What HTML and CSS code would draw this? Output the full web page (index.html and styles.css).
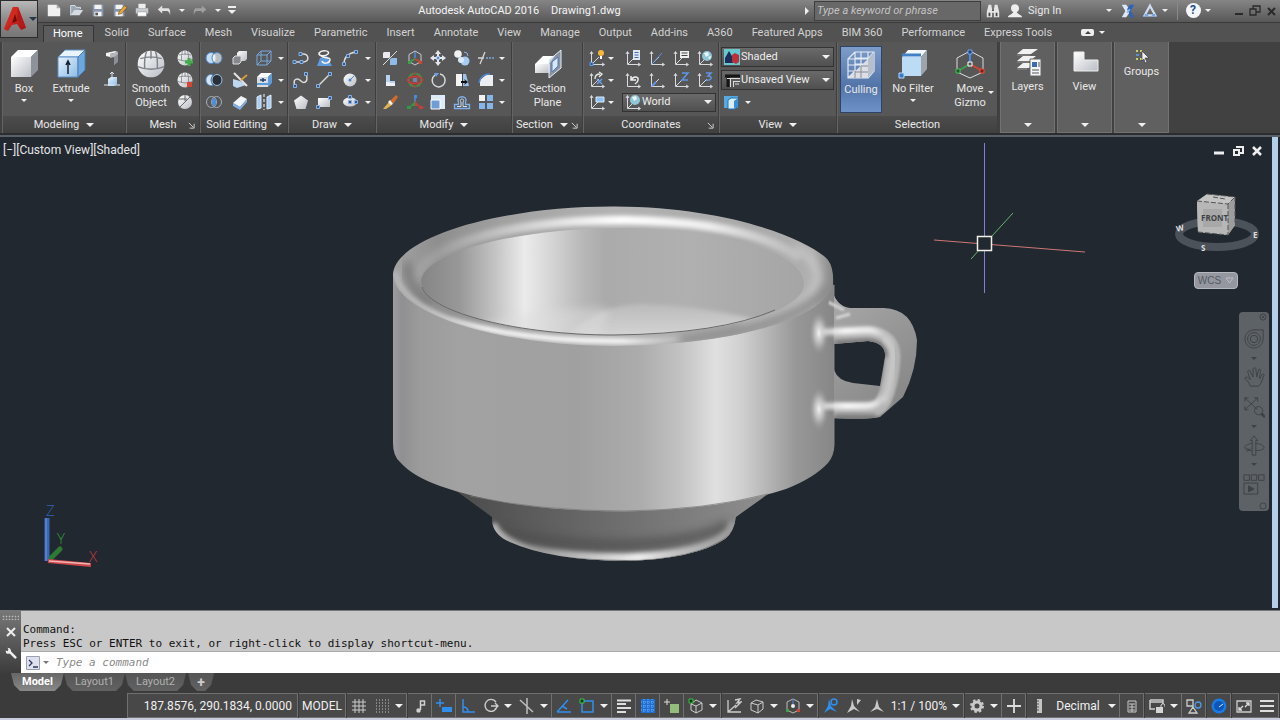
FILE: index.html
```html
<!DOCTYPE html>
<html lang="en">
<head>
<meta charset="utf-8">
<title>Autodesk AutoCAD 2016 - Drawing1.dwg</title>
<link rel="stylesheet" href="styles.css">
</head>
<body>
<svg class="defs" aria-hidden="true">
  <defs>
    <linearGradient id="gW" x1="0" y1="0" x2="1" y2="1"><stop offset="0" stop-color="#fff"/><stop offset="1" stop-color="#b9bdc4"/></linearGradient>
    <linearGradient id="gB" x1="0" y1="0" x2="1" y2="1"><stop offset="0" stop-color="#e6f2fc"/><stop offset="1" stop-color="#8dbbe6"/></linearGradient>
    <linearGradient id="gR" x1="0" y1="0" x2="1" y2="1"><stop offset="0" stop-color="#e8382c"/><stop offset="1" stop-color="#a31214"/></linearGradient>
    <symbol id="axes" viewBox="0 0 18 18"><path d="M3.500 3v12.500H16M4 15l7-7M2 5l1.500-2.500L5 5M14 14l2.500 1.500L14 17" fill="none" stroke="#d8dade"/></symbol>
    <symbol id="ball" viewBox="0 0 18 18"><circle cx="9" cy="9" r="7.500" fill="url(#gW)"/><path d="M3 6q6-2 12 0M1.500 10.500q7.500 3 15 0M6.500 2Q5 6 5.500 11.500M11.500 2Q13 6 12.500 11.500M9 1.500V6" fill="none" stroke="#7c8188" stroke-width=".8"/></symbol>
  </defs>
</svg>

<header class="top">
  <button class="app" aria-label="Application menu">
    <svg width="24" height="26" viewBox="0 0 24 26"><path d="M10 1h5l8 21-5 2-4-6-5 1-4 6-4-2z" fill="url(#gR)"/><path d="M10 1L1 23l11-11 3-11z" fill="#d3281f"/><path d="M12 8l2 7-5 2z" fill="#6f0c10"/><path d="M15 1l8 21-9-8z" fill="#b31a18"/></svg>
    <i class="dn dark"></i>
  </button>
  <div class="titlebar">
    <div class="qat">
      <button aria-label="New"><svg viewBox="0 0 18 18"><path d="M2 3h10l4 4v9H2z" fill="#f0f0f0"/><path d="M12 3v4h4" fill="#aaa"/></svg></button>
      <button aria-label="Open"><svg viewBox="0 0 18 18"><path d="M3 15V4h5l1 2h5v2" fill="#9ca7b5" stroke="#dfe5ec"/><path d="M3 15l4-6h10l-4 6z" fill="#d6dbe1"/></svg></button>
      <button aria-label="Save"><svg viewBox="0 0 18 18"><path d="M3 3h12v13H3z" fill="#8796ad"/><path d="M5 3h8v5H5zM5 11h8v5H5z" fill="#f3f3f3"/><path d="M6 12h3v3H6z" fill="#555"/></svg></button>
      <button aria-label="Save as"><svg viewBox="0 0 18 18"><path d="M2 3h12v13H2z" fill="#8796ad"/><path d="M4 3h8v5H4zM4 11h8v5H4z" fill="#f3f3f3"/><path d="M8 11l6-7 3 2-6 7-4 1z" fill="#e7a73c" stroke="#5a3d17" stroke-width=".6"/></svg></button>
      <button aria-label="Plot"><svg viewBox="0 0 18 18"><path d="M5 2h8v5H5z" fill="#eee"/><path d="M2 7h14v6H2z" fill="#c9ccd1"/><path d="M4 11h10v5H4z" fill="#fff" stroke="#888" stroke-width=".6"/></svg></button>
      <button aria-label="Undo"><svg viewBox="0 0 18 18"><path d="M7 4v3h6c3 0 3 3 3 8-1-4-2-5-4-5H7v3L2 8.500z" fill="#e2e2e2"/></svg></button>
      <button class="nar" aria-label="Undo list"><i class="dn sm"></i></button>
      <button aria-label="Redo"><svg viewBox="0 0 18 18"><path d="M11 4v3H5c-3 0-3 3-3 8 1-4 2-5 4-5h5v3l5-4.500z" fill="#a0a0a0"/></svg></button>
      <button class="nar" aria-label="Redo list"><i class="dn sm"></i></button>
      <button class="nar" aria-label="Customize"><i class="bar"></i><i class="dn"></i></button>
    </div>
    <h1 class="title">Autodesk AutoCAD 2016 <span>Drawing1.dwg</span></h1>
    <div class="info">
      <button class="nar" aria-label="Collapse search"><i class="rt"></i></button>
      <input class="search" type="text" placeholder="Type a keyword or phrase" aria-label="Search">
      <button class="bino" aria-label="Find"><svg viewBox="0 0 18 18"><path d="M4 2h3l1 5h2l1-5h3l2 8v6h-6v-5H8v5H2v-6z" fill="#e4e4e4"/><path d="M4 11h2v4H4zM12 11h2v4h-2zM8 7h2v2H8z" fill="#444"/></svg></button>
      <button class="sign"><svg viewBox="0 0 18 18"><circle cx="9" cy="6" r="4.500" fill="#eee"/><path d="M1 16c0-3 5-3 6-6h4c1 3 6 3 6 6z" fill="#eee"/></svg>Sign In</button>
      <button class="a12" aria-label="Account"><i class="dn sm"></i></button>
      <button class="b26" aria-label="Exchange"><svg viewBox="0 0 18 18"><path d="M2 2h5l5 7-5 7H2l4-7z" fill="#dfe9f5"/><path d="M16 2h-5L8 7l2 4 1 5h5l-4-7z" fill="#2c62b8"/><path d="M8 11l3-4" stroke="#8fb9ea" stroke-width="2"/></svg></button>
      <button class="b18" aria-label="A360"><svg viewBox="0 0 18 18"><path d="M9 3l6 11H3z" fill="none" stroke="#cfdcf0" stroke-width="2.500"/><path d="M3 14h4M11 14h4" stroke="#7ba6e4" stroke-width="3"/></svg></button>
      <button class="a12" aria-label="A360 list"><i class="dn sm"></i></button>
      <span class="sep"></span>
      <button class="b18" aria-label="Help"><b class="q">?</b></button>
      <button class="a12" aria-label="Help list"><i class="dn sm"></i></button>
      <span class="wins">
        <button aria-label="Minimize"><svg viewBox="0 0 12 12"><path d="M2 9h8" stroke="#2a2a2a" stroke-width="2"/></svg></button>
        <button aria-label="Restore"><svg viewBox="0 0 12 12"><path d="M1 4h6v6H1zM4 4V1h7v6H7" fill="none" stroke="#2a2a2a" stroke-width="1.300"/></svg></button>
        <button aria-label="Close"><svg viewBox="0 0 12 12"><path d="M3 3l7 7M10 3l-7 7" stroke="#2a2a2a" stroke-width="2"/></svg></button>
      </span>
    </div>
  </div>
  <nav class="tabs">
    <button class="on">Home</button><button>Solid</button><button>Surface</button><button>Mesh</button><button>Visualize</button><button>Parametric</button><button>Insert</button><button>Annotate</button><button>View</button><button>Manage</button><button>Output</button><button>Add-ins</button><button>A360</button><button>Featured Apps</button><button>BIM 360</button><button>Performance</button><button>Express Tools</button>
    <button class="mini" aria-label="Minimize ribbon"><span class="pill"><i class="up"></i></span><i class="dn sm"></i></button>
  </nav>
</header>

<main class="ribbon">
  <section class="panel modeling">
    <div class="body">
      <button class="big w42"><svg viewBox="0 0 32 32"><path d="M3 9l7-7h20l-7 7z" fill="#fff"/><path d="M3 9h20v20H3z" fill="url(#gW)"/><path d="M23 9l7-7v20l-7 7z" fill="#8e939b"/></svg>Box<i class="dn sm"></i></button>
      <button class="big w52"><svg viewBox="0 0 32 32"><path d="M3 9l7-7h20l-7 7z" fill="#e9f4fd" stroke="#5d91c6"/><path d="M3 9h20v20H3z" fill="url(#gB)" stroke="#5d91c6"/><path d="M23 9l7-7v20l-7 7z" fill="#6ea7dd" stroke="#4a7db3"/><path d="M13 26V14m-2 3l2-4 2 4" fill="none" stroke="#15202c" stroke-width="1.500"/></svg>Extrude<i class="dn sm"></i></button>
      <div class="grid g1">
        <button aria-label="Polysolid"><svg viewBox="0 0 18 18"><path d="M3 4l9-2 3 1-8 2v3l-4-1z" fill="#f2f2f4"/><path d="M7 5l8-2v9l-4 4V8L7 9z" fill="#b4b7bc"/><path d="M11 8l4-3v8l-4 3z" fill="#8c9096"/></svg></button>
        <button aria-label="Presspull"><svg viewBox="0 0 18 18"><path d="M5 8l3-2h6v7l-3 2H5z" fill="url(#gB)"/><path d="M9 9V1M7 3l2-2 2 2M1 14h16" stroke="#dbe8f5" fill="none"/></svg></button>
      </div>
    </div>
    <footer>Modeling<i class="dn"></i></footer>
  </section>
  <section class="panel mesh">
    <div class="body">
      <button class="big w48"><svg viewBox="0 0 18 18"><use href="#ball"/></svg>Smooth<br>Object</button>
      <div class="grid g2">
        <button aria-label="Smooth more"><svg viewBox="0 0 18 18"><use href="#ball"/><path d="M13 9v8M9 13h8" stroke="#3fae49" stroke-width="3"/></svg></button>
        <button aria-label="Smooth less"><svg viewBox="0 0 18 18"><use href="#ball"/><path d="M11 11h5v5h-5z" fill="#d8462f"/></svg></button>
        <button aria-label="Refine"><svg viewBox="0 0 18 18"><circle cx="9" cy="9" r="7" fill="url(#gW)"/><path d="M2 16L16 2M3 6h8M9 2v6" stroke="#666" fill="none"/></svg></button>
      </div>
    </div>
    <footer>Mesh<svg class="launch" viewBox="0 0 8 8"><path d="M1 1l5 5M7 2v5H2" fill="none" stroke="#e0e0e0"/></svg></footer>
  </section>
  <section class="panel solid">
    <div class="body"><div class="grid g3">
      <button aria-label="Union"><svg viewBox="0 0 18 18"><ellipse cx="6" cy="9" rx="5" ry="5.500" fill="#c6dcf3" stroke="#4d86c8"/><ellipse cx="12" cy="9" rx="5" ry="5.500" fill="#fff" fill-opacity=".6" stroke="#4d86c8"/></svg></button>
      <button aria-label="Interfere"><svg viewBox="0 0 18 18"><path d="M6 4l2-2h8v8l-2 2H6z" fill="url(#gW)"/><path d="M2 9l2-2h6v6l-2 2H2z" fill="#85888d" stroke="#ddd"/></svg></button>
      <button aria-label="Extract edges"><svg viewBox="0 0 18 18"><path d="M2 6h10v10H2zM6 2h10v10H6zM2 6l4-4M12 6l4-4M12 16l4-4M2 16l4-4" fill="none" stroke="#78a9df"/></svg></button>
      <i class="dn sm"></i>
      <button aria-label="Subtract"><svg viewBox="0 0 18 18"><ellipse cx="12" cy="9" rx="5" ry="5.500" fill="#2a3038" stroke="#9cbfe6"/><path d="M8 4a5 5.500 0 1 0 0 10 8 8 0 0 1 0-10z" fill="#d5e5f6" stroke="#4d86c8"/></svg></button>
      <button aria-label="Slice"><svg viewBox="0 0 18 18"><path d="M2 8l7 2 6 4-9 3-4-2z" fill="#bed7ef"/><path d="M3 2l13 13" stroke="#e3e3e3" stroke-width="2"/><path d="M10 9l6-5" stroke="#d69a3c" stroke-width="2"/></svg></button>
      <button aria-label="Extrude faces"><svg viewBox="0 0 18 18"><path d="M2 6l4-4h11l-4 4z" fill="#fff"/><path d="M2 6h11v10H2z" fill="#d8dde4"/><path d="M13 6l4-4v10l-4 4z" fill="#5e9bd9"/><path d="M5 9h6M8 7v4" stroke="#22426a" stroke-width="1.500"/><path d="M2 12h11v2H2z" fill="#5e9bd9"/></svg></button>
      <i class="dn sm"></i>
      <button aria-label="Intersect"><svg viewBox="0 0 18 18"><ellipse cx="6.500" cy="9" rx="5" ry="5.500" fill="none" stroke="#a3aebb"/><ellipse cx="11.500" cy="9" rx="5" ry="5.500" fill="none" stroke="#a3aebb"/><path d="M9 4.500q4.500 4.500 0 9-4.500-4.500 0-9z" fill="#4a90dc"/></svg></button>
      <button aria-label="Thicken"><svg viewBox="0 0 18 18"><path d="M2 10l8-7 6 3-7 8z" fill="#f1f4f8"/><path d="M2 10l7 4 7-8v3l-7 8-7-4z" fill="#83b1e2"/></svg></button>
      <button aria-label="Separate"><svg viewBox="0 0 18 18"><path d="M2 4l4-2v13l-4 1zM12 4l4-2v13l-4 1z" fill="#a9cdf0" stroke="#dcebfa"/><path d="M9 1v16" stroke="#fff" stroke-dasharray="3 2"/></svg></button>
      <i class="dn sm"></i>
    </div></div>
    <footer>Solid Editing<i class="dn"></i></footer>
  </section>
  <section class="panel draw">
    <div class="body"><div class="grid g4">
      <button aria-label="Polyline"><svg viewBox="0 0 18 18"><path d="M2 13h9c7 0 6-8 0-8H8" fill="none" stroke="#dcdcdc" stroke-width="1.500"/><path d="M1 11.500h3v3H1zM8 11.500h3v3H8zM7 3.500h3v3H7z" fill="#3c5680" stroke="#86b2ea"/></svg></button>
      <button aria-label="Helix"><svg viewBox="0 0 18 18"><path d="M5 9l-3 8h15l-5-10z" fill="#5e9bdc"/><path d="M4 4c3-4 12-2 9 1S3 7 4 4c1 7 12 3 11 7s-7 4-8 1" fill="none" stroke="#f3f3f3" stroke-width="1.500"/></svg></button>
      <button aria-label="Arc"><svg viewBox="0 0 18 18"><path d="M3 15C3 8 8 4 15 3" fill="none" stroke="#dcdcdc" stroke-width="1.500"/><path d="M1.500 13.500h3v3h-3zM5.500 5.500h3v3h-3zM13.500 1.500h3v3h-3z" fill="#3c5680" stroke="#86b2ea"/></svg></button>
      <i class="dn sm"></i>
      <button aria-label="Spline"><svg viewBox="0 0 18 18"><path d="M3 15c-3-8 3-8 6-5s8 1 5-7" fill="none" stroke="#dcdcdc" stroke-width="1.500"/><path d="M1.500 13.500h3v3h-3zM12.500 1.500h3v3h-3z" fill="#3c5680" stroke="#86b2ea"/></svg></button>
      <button aria-label="Line"><svg viewBox="0 0 18 18"><path d="M3 15L15 3" stroke="#dcdcdc" stroke-width="1.500"/><path d="M1.500 13.500h3v3h-3zM13.500 1.500h3v3h-3z" fill="#3c5680" stroke="#86b2ea"/></svg></button>
      <button aria-label="Circle"><svg viewBox="0 0 18 18"><circle cx="9" cy="9" r="6.500" fill="url(#gW)"/><circle cx="9" cy="9" r="1.500" fill="#4d86c8"/><path d="M9 9l4-4" stroke="#4d86c8"/></svg></button>
      <i class="dn sm"></i>
      <button aria-label="Polygon"><svg viewBox="0 0 18 18"><path d="M9 2.500l7 5L13.500 16h-9L2 7.500z" fill="url(#gW)"/></svg></button>
      <button aria-label="Rectangle"><svg viewBox="0 0 18 18"><path d="M3 5h12v9H3z" fill="url(#gW)"/><path d="M1.500 12.500h3v3h-3zM13.500 3.500h3v3h-3z" fill="#3c5680" stroke="#86b2ea"/></svg></button>
      <button aria-label="Ellipse"><svg viewBox="0 0 18 18"><ellipse cx="9" cy="9" rx="7" ry="4.500" fill="url(#gW)"/><path d="M7.500 7.500h3v3h-3zM7.500 2.500h3v3h-3zM13.500 7.500h3v3h-3z" fill="#3c5680" stroke="#86b2ea"/></svg></button>
      <i class="dn sm"></i>
    </div></div>
    <footer>Draw<i class="dn"></i></footer>
  </section>
  <section class="panel modify">
    <div class="body"><div class="grid g5">
      <button aria-label="3D mirror"><svg viewBox="0 0 18 18"><path d="M2 4l1-1h6v5L8 9H2z" fill="#e8eaee"/><path d="M9 10l2-1h5v6l-1 1H9z" fill="#8ebbe9"/><path d="M2 16L16 2" stroke="#ddd"/></svg></button>
      <button aria-label="3D move"><svg viewBox="0 0 18 18"><path d="M9 2l6 3.500v7L9 16l-6-3.500v-7z" fill="none" stroke="#c7cbd1"/><path d="M9 9V3" stroke="#4a8be0" stroke-width="1.500"/><path d="M9 10l-6 3" stroke="#37a148" stroke-width="1.500"/><path d="M9 10l6 3" stroke="#d1442e" stroke-width="1.500"/><path d="M2 12h3v3H2z" fill="#37a148"/><path d="M13 12h3v3h-3z" fill="#d1442e"/></svg></button>
      <button aria-label="Move"><svg viewBox="0 0 18 18"><path d="M9 1l3 4h-2v2H8V5H6zM9 17l3-4h-2v-2H8v2H6zM1 9l4-3v2h2v2H5v2zM17 9l-4-3v2h-2v2h2v2z" fill="#e4e8ee"/><path d="M7.500 7.500h3v3h-3z" fill="#5a8fd0" stroke="#b9d2f0"/></svg></button>
      <button aria-label="Copy"><svg viewBox="0 0 18 18"><circle cx="5" cy="5" r="3.800" fill="#f2f2f2"/><circle cx="12" cy="12" r="4.500" fill="#a6ccf3"/><circle cx="8" cy="11" r="3" fill="#dce9f7"/><path d="M11 3q4 0 4 4" fill="none" stroke="#8fb7ea"/></svg></button>
      <button aria-label="Trim"><svg viewBox="0 0 18 18"><path d="M1 9h6M3 15L8 3" stroke="#d6d6d6" stroke-width="1.300"/><path d="M9 9h8" stroke="#79a8e4" stroke-width="1.500" stroke-dasharray="2 1"/></svg></button>
      <i class="dn sm"></i>
      <button aria-label="3D align"><svg viewBox="0 0 18 18"><path d="M5 4h4v6h5v5H5z" fill="#b5d2ef"/><path d="M5 11h3l1 1h5v3H5z" fill="#eef2f6"/></svg></button>
      <button aria-label="3D rotate"><svg viewBox="0 0 18 18"><circle cx="9" cy="9" r="6.500" fill="none" stroke="#3c9b45" stroke-width="1.500"/><ellipse cx="9" cy="9" rx="7.500" ry="3.500" fill="none" stroke="#cb3c34" stroke-width="1.500"/><ellipse cx="9" cy="9" rx="3" ry="7" fill="none" stroke="#b8403c"/><path d="M7 7h4v4H7z" fill="#6a87b3"/></svg></button>
      <button aria-label="Rotate"><svg viewBox="0 0 18 18"><path d="M6 4a6.500 6.500 0 1 0 5-1" fill="none" stroke="#d5d8dc" stroke-width="1.500"/><path d="M5 2h5L7 6z" fill="#6fa3e6"/></svg></button>
      <button aria-label="Mirror"><svg viewBox="0 0 18 18"><path d="M3 3h6v12H3z" fill="#f4f4f4"/><path d="M10 3h3l3 12h-6z" fill="#9dc3ec"/><path d="M9.500 1v16" stroke="#444"/><path d="M8 10h4l-1-2 4 3-4 3 1-2H8z" fill="#111"/></svg></button>
      <button aria-label="Fillet"><svg viewBox="0 0 18 18"><path d="M3 15V9l6-5h7v11z" fill="#eceef1"/><path d="M2 12C3 6 6 3 13 3" fill="none" stroke="#4b86cf" stroke-width="1.500"/></svg></button>
      <i class="dn sm"></i>
      <button aria-label="Erase"><svg viewBox="0 0 18 18"><path d="M2 16L8 9l3 3-6 4z" fill="#e3b552"/><path d="M9 8l6-6 2 2-5 7z" fill="#d36b2a"/><path d="M7 9l2-2 3 4-2 1z" fill="#f4f4f4"/></svg></button>
      <button aria-label="3D scale"><svg viewBox="0 0 18 18"><path d="M9 10V4" stroke="#4a8be0" stroke-width="1.500"/><path d="M9 8l-5 5h5z" fill="#2f9a45"/><path d="M9 8l5 5H9z" fill="#cb3c34"/><path d="M8 2h3v3H8z" fill="#4a8be0"/><path d="M1 13h4v3H1z" fill="#2f9a45"/><path d="M13 13h4v3h-4z" fill="#cb3c34"/></svg></button>
      <button aria-label="Scale"><svg viewBox="0 0 18 18"><path d="M2 2h14v14H2z" fill="#dceafa"/><path d="M2 7h9v9H2z" fill="#6f9ed6" stroke="#fff"/></svg></button>
      <button aria-label="Offset"><svg viewBox="0 0 18 18"><path d="M1.500 15.500v-4h4V9C2 2 16 2 12.500 9v2.500h4v4z" fill="none" stroke="#80b1ec" stroke-width="1.300"/><path d="M4 13.500h4V9c-3-4 5-4 2 0v4.500h4" fill="none" stroke="#d0e0f3"/></svg></button>
      <button aria-label="Array"><svg viewBox="0 0 18 18"><path d="M2 2h6v6H2z" fill="#f2f2f2"/><path d="M10 2h6v6h-6zM2 10h6v6H2zM10 10h6v6h-6z" fill="#86b5ea"/></svg></button>
      <i class="dn sm"></i>
    </div></div>
    <footer>Modify<i class="dn"></i></footer>
  </section>
  <section class="panel section">
    <div class="body">
      <button class="big"><svg viewBox="0 0 32 32"><path d="M3 16l8-8h12l-6 8z" fill="#fff"/><path d="M3 16h15v9H3z" fill="url(#gW)"/><path d="M17 12L29 2v18L17 30z" fill="#a7bbd6" fill-opacity=".6" stroke="#e8edf3"/><path d="M20 14l6-5v9l-6 6z" fill="#d9e9fb" stroke="#4f7cc0"/></svg>Section<br>Plane</button>
    </div>
    <footer>Section<i class="dn"></i><svg class="launch" viewBox="0 0 8 8"><path d="M1 1l5 5M7 2v5H2" fill="none" stroke="#e0e0e0"/></svg></footer>
  </section>
  <section class="panel coords">
    <div class="body"><div class="grid g6">
      <button aria-label="UCS"><svg viewBox="0 0 18 18"><use href="#axes"/><path d="M2 13.500h3v3H2z" fill="#3c5680" stroke="#5f9cf0"/><circle cx="13" cy="4" r="3" fill="#f6b73c"/><path d="M12 7h2v3h-2z" fill="#fff"/></svg></button><i class="dn sm"></i>
      <button aria-label="Named UCS"><svg viewBox="0 0 18 18"><use href="#axes"/><path d="M9 1h7v10H9z" fill="#dfe7f2"/><path d="M10.500 3.500h4M10.500 6h4M10.500 8.500h4" stroke="#3a6db5"/></svg></button>
      <button aria-label="UCS origin"><svg viewBox="0 0 18 18"><use href="#axes"/><path d="M4 15L14 4" stroke="#5f95e8"/></svg></button>
      <button aria-label="UCS view"><svg viewBox="0 0 18 18"><use href="#axes"/><path d="M8 2h9v7H8z" fill="#f0f0f0"/><path d="M9.500 4h6M9.500 6.500h6" stroke="#444"/></svg></button>
      <button aria-label="UCS world"><svg viewBox="0 0 18 18"><use href="#axes"/><circle cx="11" cy="7" r="5" fill="#8fc6d8"/><path d="M8 4l4-1 1 3-3 2zM12 8l3-1-1 4z" fill="#e8f6f4"/></svg></button>
      <button aria-label="Rotate X"><svg viewBox="0 0 18 18"><use href="#axes"/><path d="M7 8q0-5 5-5M11 1l3 2-3 3" fill="none" stroke="#eee" stroke-width="1.300"/><path d="M9 8l5 5M14 8l-5 5" stroke="#6da2ee" stroke-width="1.300"/></svg></button><i class="dn sm"></i>
      <button aria-label="UCS previous"><svg viewBox="0 0 18 18"><path d="M3.500 3v12.500H16M2 5l1.500-2.500L5 5M14 14l2.500 1.500L14 17" fill="none" stroke="#d8dade"/><path d="M7 5v4h5M7 9c3-5 8-3 7 0q0 2-3 4" fill="none" stroke="#eee" stroke-width="1.500"/></svg></button>
      <button aria-label="UCS face"><svg viewBox="0 0 18 18"><use href="#axes"/><path d="M4 15l4-4" stroke="#5f95e8" stroke-width="2"/></svg></button>
      <button aria-label="Z axis"><svg viewBox="0 0 18 18"><use href="#axes"/><path d="M10 2h6l-6 7h6" fill="none" stroke="#5f95e8" stroke-width="1.500"/></svg></button>
      <button aria-label="3 point"><svg viewBox="0 0 18 18"><use href="#axes"/><path d="M10 2h5l-3 3c5 0 4 5-2 4" fill="none" stroke="#5f95e8" stroke-width="1.500"/></svg></button>
      <button aria-label="Show UCS icon"><svg viewBox="0 0 18 18"><use href="#axes"/><path d="M8 4h8v5H8z" fill="#8fc0f5" stroke="#dbeafa"/></svg></button><i class="dn sm"></i>
      <label class="drop world"><svg viewBox="0 0 18 18"><use href="#axes"/><circle cx="11" cy="7" r="5" fill="#8fc6d8"/><path d="M8 4l4-1 1 3-3 2z" fill="#e8f6f4"/></svg><select aria-label="Coordinate system"><option>World</option></select><i class="dn"></i></label>
    </div></div>
    <footer>Coordinates<svg class="launch" viewBox="0 0 8 8"><path d="M1 1l5 5M7 2v5H2" fill="none" stroke="#e0e0e0"/></svg></footer>
  </section>
  <section class="panel viewp">
    <div class="body stack">
      <label class="drop"><svg viewBox="0 0 18 18"><path d="M1 1h16v16H1z" fill="#67c8ce"/><path d="M2 15V10l4-7 4 7v5z" fill="#1c2b58"/><path d="M9 7l3-2 4 2v7l-3 2-4-2z" fill="#b9323a"/></svg><select aria-label="Visual style"><option>Shaded</option></select><i class="dn"></i></label>
      <label class="drop"><svg viewBox="0 0 18 18"><path d="M2 5h15M5 5v11" stroke="#151515" stroke-width="3"/><path d="M4 7.500h13M7.500 8v8M10 10.500h7M10.500 11v5M12 13h4" stroke="#ddd" fill="none"/></svg><select aria-label="Saved view"><option>Unsaved View</option></select><i class="dn"></i></label>
      <div class="viewbtn"><button aria-label="View manager"><svg viewBox="0 0 18 18"><path d="M1 3h14v12H1z" fill="#58a9e2"/><path d="M5 7l3-2h7v8l-3 3H5z" fill="#d9eefb" stroke="#1e73b8"/><path d="M11 8l4-3v8l-4 3z" fill="#3a8fd2"/></svg></button><i class="dn sm"></i></div>
    </div>
    <footer>View<i class="dn"></i></footer>
  </section>
  <section class="panel selection">
    <div class="body">
      <button class="big cull"><svg viewBox="0 0 32 32"><path d="M3 10h20v19H3zM10 3h19v19H10zM3 10l7-7M23 10l6-7M23 29l6-7M3 29l7-7M10 10v19M16 10v19M3 16h20M3 22h20M16 3v19M23 3v19M10 9h19M10 15h19" fill="none" stroke="#e4eaf4" stroke-width="1.200"/><path d="M3 29L23 10v19z" fill="#dcdee3"/><path d="M23 10l6-7v19l-6 7z" fill="#b6bfce"/><path d="M10 22v7M16 17v12M10 23h13M16 17h7" stroke="#858d9a"/></svg>Culling</button>
      <button class="big w60"><svg viewBox="0 0 32 32"><path d="M5 9l6-7h19l-6 7z" fill="#f4f7fb"/><path d="M5 9h19v19H5z" fill="#bcdcf6"/><path d="M24 9l6-7v19l-6 7z" fill="#9ea4ac"/><path d="M5 7h19" stroke="#417fc9" stroke-width="3"/><path d="M2 25h5v5H2z" fill="#337acb" stroke="#b9d7f7"/></svg>No Filter<i class="dn sm"></i></button>
      <button class="big w52"><svg viewBox="0 0 32 32"><path d="M16 3l13 7v14l-13 6-13-6V10z" fill="none" stroke="#d9dce0"/><path d="M16 16V4" stroke="#4b8ae8" stroke-width="2"/><path d="M16 16L4 23" stroke="#3da248" stroke-width="2"/><path d="M16 16l12 7" stroke="#d3452f" stroke-width="2"/><path d="M14 2h4v4h-4z" fill="#243f70" stroke="#6ba2f4"/><path d="M2 21h4v4H2z" fill="#1e5a28" stroke="#4dbb5a"/><path d="M26 21h4v4h-4z" fill="#7a2015" stroke="#e35540"/><path d="M14 14h4v4h-4z" fill="#555" stroke="#fff"/></svg>Move<br>Gizmo</button>
      <i class="dn sm giz"></i>
    </div>
    <footer>Selection</footer>
  </section>
  <button class="fold"><svg viewBox="0 0 32 32"><path d="M5 8l6-5h15l-7 5zM5 15l6-5h13l-6 5zM5 22l6-5h9l-3 5z" fill="#f1f1f1"/><path d="M5 9h13M5 16h12M5 23h10" stroke="#8d8d8d"/><path d="M18 13h11v17H18z" fill="#f4f6f9" stroke="#666"/><path d="M20 16h5v5h-5z" fill="#3b6db7"/><path d="M20 24h7M20 27h7M27 16v5" stroke="#555"/></svg>Layers<i class="dn"></i></button>
  <button class="fold"><svg viewBox="0 0 32 32"><path d="M5 6h10v8h14v11H5z" fill="url(#gW)" stroke="#eee"/></svg>View<i class="dn"></i></button>
  <button class="fold short"><svg viewBox="0 0 18 18"><path d="M3 4h2v2H3zM3 12h2v2H3zM7 4h2v2H7zM7 12h2v2H7z" fill="#c9d36a"/><path d="M3 8h3v2H3z" fill="#5e8fd0"/><path d="M9 5l7 7h-4l2 4-2 1-1-4-2 2z" fill="#eee" stroke="#333" stroke-width=".6"/></svg>Groups<i class="dn"></i></button>
</main>

<section class="canvas">
  <svg class="scene" viewBox="0 137 1280 473" preserveAspectRatio="xMidYMid meet">
    <defs>
      <linearGradient id="body" gradientUnits="userSpaceOnUse" x1="393" y1="0" x2="835" y2="0"><stop offset="0" stop-color="#9c9ca0"/><stop offset=".02" stop-color="#909093"/><stop offset=".06" stop-color="#9b9b9b"/><stop offset=".15" stop-color="#a2a2a2"/><stop offset=".42" stop-color="#a0a0a0"/><stop offset=".56" stop-color="#acacac"/><stop offset=".65" stop-color="#c2c2c2"/><stop offset=".73" stop-color="#e0e0e0"/><stop offset=".79" stop-color="#cfcfcf"/><stop offset=".85" stop-color="#b4b4b4"/><stop offset=".91" stop-color="#989898"/><stop offset="1" stop-color="#868686"/></linearGradient>
      <linearGradient id="wall" gradientUnits="userSpaceOnUse" x1="421" y1="0" x2="805" y2="0"><stop offset="0" stop-color="#858585"/><stop offset=".1" stop-color="#989898"/><stop offset=".19" stop-color="#c2c2c2"/><stop offset=".27" stop-color="#ebebeb"/><stop offset=".33" stop-color="#d8d8d8"/><stop offset=".42" stop-color="#b8b8b8"/><stop offset=".48" stop-color="#ababab"/><stop offset=".7" stop-color="#b0b0b0"/><stop offset="1" stop-color="#a5a5a5"/></linearGradient>
      <linearGradient id="rim" gradientUnits="userSpaceOnUse" x1="393" y1="0" x2="835" y2="0"><stop offset="0" stop-color="#a4a4a4"/><stop offset=".1" stop-color="#8e8e8e"/><stop offset=".25" stop-color="#a0a0a0"/><stop offset=".5" stop-color="#b4b4b4"/><stop offset=".8" stop-color="#a8a8a8"/><stop offset=".95" stop-color="#b0b0b0"/><stop offset="1" stop-color="#858585"/></linearGradient>
      <linearGradient id="hiB" gradientUnits="userSpaceOnUse" x1="440" y1="0" x2="800" y2="0"><stop offset="0" stop-color="#fff" stop-opacity="0"/><stop offset=".5" stop-color="#fff"/><stop offset=".75" stop-color="#eee"/><stop offset="1" stop-color="#ccc" stop-opacity=".5"/></linearGradient>
      <linearGradient id="hiF" gradientUnits="userSpaceOnUse" x1="393" y1="0" x2="700" y2="0"><stop offset="0" stop-color="#ccc" stop-opacity=".5"/><stop offset=".3" stop-color="#fff"/><stop offset=".75" stop-color="#fff"/><stop offset="1" stop-color="#ccc" stop-opacity="0"/></linearGradient>
      <linearGradient id="foot" gradientUnits="userSpaceOnUse" x1="460" y1="0" x2="770" y2="0"><stop offset="0" stop-color="#4c4c4c"/><stop offset=".3" stop-color="#606060"/><stop offset=".6" stop-color="#747474"/><stop offset="1" stop-color="#8f8f8f"/></linearGradient>
      <linearGradient id="base" gradientUnits="userSpaceOnUse" x1="492" y1="0" x2="736" y2="0"><stop offset="0" stop-color="#b4b4b4"/><stop offset=".2" stop-color="#9a9a9a"/><stop offset=".6" stop-color="#f0f0f0"/><stop offset=".75" stop-color="#c4c4c4"/><stop offset="1" stop-color="#969696"/></linearGradient>
      <linearGradient id="hand" gradientUnits="userSpaceOnUse" x1="833" y1="300" x2="917" y2="400"><stop offset="0" stop-color="#a8a8a8"/><stop offset=".5" stop-color="#969696"/><stop offset="1" stop-color="#858585"/></linearGradient>
      <linearGradient id="floor" gradientUnits="userSpaceOnUse" x1="0" y1="304" x2="0" y2="334"><stop offset="0" stop-color="#bbb"/><stop offset="1" stop-color="#d2d2d2"/></linearGradient>
      <linearGradient id="topHi" gradientUnits="userSpaceOnUse" x1="828" y1="0" x2="898" y2="0"><stop offset="0" stop-color="#ddd"/><stop offset=".25" stop-color="#fff"/><stop offset=".65" stop-color="#eee"/><stop offset="1" stop-color="#bbb" stop-opacity="0"/></linearGradient>
      <radialGradient id="joint"><stop offset="0" stop-color="#f4f4f4"/><stop offset=".45" stop-color="#d0d0d0" stop-opacity=".7"/><stop offset="1" stop-color="#999" stop-opacity="0"/></radialGradient>
      <filter id="b1" x="-20%" y="-60%" width="140%" height="220%"><feGaussianBlur stdDeviation="1"/></filter>
      <filter id="b2" x="-20%" y="-60%" width="140%" height="220%"><feGaussianBlur stdDeviation="2"/></filter>
      <filter id="b4" x="-20%" y="-60%" width="140%" height="220%"><feGaussianBlur stdDeviation="4"/></filter>
      <clipPath id="cRim"><path d="M393 274C396 237 500 206 615 206.500C735 207 812 242 828 260Q834 268 833 284C824 322 720 346 613 346C500 346 394 314 393 274z"/></clipPath>
      <clipPath id="cIn"><path d="M421 281C423 252 520 228 620 228C720 228 804 252 804 284C803 314 715 335 613 335C515 335 423 312 421 281z"/></clipPath>
      <clipPath id="cFoot"><path d="M455 490L492 517Q491 534 510 542Q550 560 625 561Q695 559 725 539Q734 532 736 517L775 489z"/></clipPath>
      <clipPath id="cHand"><path clip-rule="evenodd" d="M831 286Q835 306 850 308H884Q912 309 917 340Q917 370 903 397L880 417Q870 420 826 418V320zM834 344L868 341Q886 343 885 357L880 386L853 383Q838 381 834 370z"/></clipPath>
    </defs>
    <g clip-path="url(#cFoot)">
      <path d="M450 485h330v80H450z" fill="url(#foot)"/>
      <path d="M500 530Q540 544 620 545Q700 542 728 524" fill="none" stroke="#4e4e4e" stroke-width="10" filter="url(#b4)" opacity=".7"/>
      <path d="M492 524Q500 542 530 550Q570 558 625 558Q690 556 718 541Q732 533 734 522" fill="none" stroke="url(#base)" stroke-width="9" filter="url(#b2)"/>
      <path d="M492 530Q500 546 540 555Q590 562 640 561Q710 557 736 530" fill="none" stroke="#777" stroke-width="2"/>
    </g>
    <path d="M393 274V443Q393 456 400 462Q412 476 440 486Q510 511 625 511.500Q725 509 786 489Q814 478 828 463Q834 456 834.500 445V285Q720 250 393 274z" fill="url(#body)"/>
    <path d="M470 496Q540 511 625 511Q705 510 768 494" fill="none" stroke="#777" stroke-opacity=".7"/>
    <g clip-path="url(#cHand)">
      <path d="M834 280h86v145h-86z" fill="url(#hand)"/>
      <path d="M828 302l16 8M836 318l14-4" fill="none" stroke="#d4d4d4" stroke-width="3" filter="url(#b1)"/>
      <path d="M834 336L868 334Q893 335 893 357Q892 382 884 400Q880 410 866 410H834" fill="none" stroke="#b4b4b4" stroke-width="15" filter="url(#b1)"/>
      <path d="M834 343L868 341Q886 343 886 357M834 417H876" fill="none" stroke="#727272" stroke-width="5" filter="url(#b2)"/>
      <path d="M884 338Q894 345 893 360Q891 382 884 402" fill="none" stroke="#cacaca" stroke-width="6" filter="url(#b2)"/>
    </g>
    <ellipse cx="819" cy="333" rx="10" ry="22" fill="url(#joint)"/><ellipse cx="819" cy="409" rx="10" ry="22" fill="url(#joint)"/>
    <path d="M822 332L868 330Q884 331 893 346" fill="none" stroke="url(#topHi)" stroke-width="6" filter="url(#b2)"/>
    <path d="M822 406H866Q878 406 884 396" fill="none" stroke="url(#topHi)" stroke-width="6" filter="url(#b2)"/>
    <g clip-path="url(#cRim)">
      <path d="M390 200h450v150H390z" fill="url(#rim)"/>
      <path d="M414 285C412 250 510 218 620 217C740 218 813 247 814 283" fill="none" stroke="#aaa" stroke-width="6" filter="url(#b4)"/>
      <path d="M420 262Q490 220 625 220Q750 222 800 258" fill="none" stroke="url(#hiB)" stroke-width="9" filter="url(#b2)"/>
      <path d="M795 248Q822 262 816 286Q800 314 740 325" fill="none" stroke="#c8c8c8" stroke-width="7" filter="url(#b4)"/>
      <path d="M408 262Q404 286 432 304" fill="none" stroke="#7c7c7c" stroke-width="9" filter="url(#b4)"/>
      <path d="M395 272Q400 300 448 319Q520 341 613 341Q660 342 700 337" fill="none" stroke="url(#hiF)" stroke-width="5" filter="url(#b2)"/>
      <path d="M680 340Q800 326 831 285" fill="none" stroke="#8a8a8a" stroke-width="8" filter="url(#b4)"/>
    </g>
    <g clip-path="url(#cIn)">
      <path d="M415 220h395v120H415z" fill="url(#wall)"/>
      <path d="M560 345Q590 304 645 304Q710 306 780 326V345z" fill="url(#floor)" filter="url(#b2)"/>
      <path d="M480 325Q550 306 610 308L600 340H480z" fill="#dcdcdc" opacity=".5" filter="url(#b4)"/>
    </g>
    <path d="M422 287C430 313 520 335 613 335Q720 334 775 310" fill="none" stroke="#6a6a6a" stroke-width="1"/>

    <path d="M984.500 143v150" stroke="#7f80d6"/><path d="M1013 213l-42 46" stroke="#62b46c"/><path d="M934 240l151 12" stroke="#cf7676"/>
    <path d="M977.500 236.500h14v14h-14z" fill="#212830" stroke="#f0f0e6" stroke-width="1.500"/>

    <path d="M47 518v43" stroke="#3a66b8" stroke-width="5"/><path d="M46 518v43" stroke="#7197dd"/>
    <path d="M51 558l9-9" stroke="#2d7a35" stroke-width="5" stroke-linecap="round"/>
    <path d="M48 561l43 4" stroke="#c9474a" stroke-width="4"/><path d="M49 561l41 3" stroke="#f2b4b4" stroke-width="1.500"/>
    <g class="ax"><text x="46" y="516" fill="#2f62b8">Z</text><text x="57" y="544" fill="#2f9a3c">Y</text><text x="89" y="562" fill="#c8383c">X</text></g>

    <ellipse cx="1217" cy="234" rx="38" ry="13" fill="none" stroke="#4b525a" stroke-width="8"/>
    <path d="M1197 201l10-7 28 3v28l-7 10-30-3z" fill="#c4c4c4"/>
    <path d="M1197 201l31 3v31l-30-3z" fill="#b7b7b7"/><path d="M1228 204l7-7v28l-7 10z" fill="#9d9d9d"/><path d="M1203 209h19v18h-19z" fill="#a8a8a8"/>
    <path d="M1197 201l31 3 7-7M1228 204v31M1198 232l30 3M1207 194l28 3v28M1213 197l12 2" fill="none" stroke="#555" stroke-dasharray="5 2"/>
    <g class="cube"><text x="1201" y="221" fill="#3d4448">FRONT</text><text x="1176" y="231" fill="#ddd" transform="rotate(-12 1180 228)">W</text><text x="1201" y="251" fill="#ddd">S</text><text x="1253" y="238" fill="#ddd">E</text></g>
  </svg>
  <div class="vlabel"><button>[−]</button><button>[Custom View]</button><button>[Shaded]</button></div>
  <div class="vwin">
    <button aria-label="Minimize view"><svg viewBox="0 0 12 12"><path d="M1 8h10" stroke="#eee" stroke-width="3"/></svg></button>
    <button aria-label="Restore view"><svg viewBox="0 0 12 12"><path d="M2 5h5v5H2zM4 2h7v6H8" fill="none" stroke="#eee" stroke-width="2"/></svg></button>
    <button aria-label="Close view"><svg viewBox="0 0 12 12"><path d="M2 2l8 8M10 2l-8 8" stroke="#eee" stroke-width="2.500"/></svg></button>
  </div>
  <button class="wcs">WCS<svg viewBox="0 0 9 7"><path d="M1 1h7L4.500 6z" fill="none" stroke="#b9bdc3"/></svg></button>
  <div class="nav">
    <svg class="tiny" viewBox="0 0 9 9"><circle cx="4.500" cy="4.500" r="3.500" fill="none" stroke="#3c4146"/><path d="M3 3l3 3M6 3L3 6" stroke="#3c4146"/></svg>
    <button aria-label="Steering wheel"><svg viewBox="0 0 24 24"><path d="M12 2h10v10a10 10 0 1 1-10-10z"/><circle cx="12" cy="12" r="7"/><circle cx="12" cy="12" r="4"/></svg></button>
    <i class="dn sm ink"></i>
    <button aria-label="Pan"><svg viewBox="0 0 24 24"><path d="M8 22c-1-4-4-6-6-9 2-2 4 0 6 2L5 6c1-2 3-1 3 0l3 6V3c1-2 3-1 3 0l1 9 2-8c1-1 3 0 2 1l-1 9 3-5c2-1 2 1 2 1-2 4-2 8-6 12z"/></svg></button>
    <button aria-label="Zoom extents"><svg viewBox="0 0 24 24"><path d="M2 2l14 13M2 15L16 2M2 6V2h4M12 2h4v4M2 11v4h4"/><circle cx="17" cy="16" r="4.500"/><path d="M20 19l4 4" stroke-width="3"/></svg></button>
    <i class="dn sm ink"></i>
    <button aria-label="Orbit"><svg viewBox="0 0 24 24"><path d="M10 22V6H8l4-5 4 5h-2v16z"/><path d="M10 9C-1 11-1 17 10 17M14 9c12 2 12 8 0 8M4 18l4-3M4 14l4 3"/></svg></button>
    <i class="dn sm ink"></i>
    <button aria-label="ShowMotion"><svg viewBox="0 0 24 24"><path d="M1 2h6v6H1zM9 2h6v6H9zM17 2h6v6h-6zM1 11h15v12H1z"/><path d="M6 14l6 3.500-6 3z" fill="#3c4146"/></svg></button>
    <svg class="tiny" viewBox="0 0 9 9"><circle cx="4.500" cy="4.500" r="3.500" fill="none" stroke="#3c4146"/></svg>
  </div>
  <div class="edge"></div>
</section>

<section class="cmd">
  <div class="grip">
    <i class="dots"></i>
    <button aria-label="Close command line"><svg viewBox="0 0 12 12"><path d="M2 2l8 8M10 2l-8 8" stroke="#eee" stroke-width="2"/></svg></button>
    <button aria-label="Customize command line"><svg viewBox="0 0 14 14"><path d="M5 5l7 7" stroke="#eee" stroke-width="3" stroke-linecap="round"/><path d="M3 1l1 2-1 2-2-1c-1 4 3 5 5 3s1-6-3-6z" fill="#eee"/></svg></button>
  </div>
  <div class="log">
    <p>Command:</p>
    <p>Press ESC or ENTER to exit, or right-click to display shortcut-menu.</p>
  </div>
  <div class="entry">
    <button class="prompt" aria-label="Recent commands"><svg viewBox="0 0 14 14"><path d="M.5.500h13v13H.5z" fill="#dfe2ee" stroke="#9a9fb3"/><path d="M3 4l3 3-3 3M7 11h5" fill="none" stroke="#30375a" stroke-width="1.300"/></svg><i class="dn sm grey"></i></button>
    <input type="text" placeholder="Type a command" aria-label="Command">
  </div>
</section>

<nav class="sheets"><button class="on">Model</button><button>Layout1</button><button>Layout2</button><button class="plus">+</button></nav>

<footer class="status">
  <div class="cell pos">187.8576, 290.1834, 0.0000</div>
  <div class="cell sp"><button class="txt">MODEL</button></div>
  <div class="cell sp">
    <button aria-label="Grid"><svg viewBox="0 0 16 16"><path d="M4 1v14M8 1v14M12 1v14M1 4h14M1 8h14M1 12h14" stroke="#ccc"/></svg></button>
    <button aria-label="Snap"><svg viewBox="0 0 16 16"><path d="M2 2h13M2 5h13M2 8h13M2 11h13M2 14h13" stroke="#c4c4c4" stroke-dasharray="1 2"/></svg></button><i class="dn"></i></div>
  <div class="cell"><button aria-label="Infer"><svg viewBox="0 0 16 16"><path d="M5 11h3v3H5z" fill="#d0d0d0" stroke="#d0d0d0"/><path d="M8.500 12V3h4v4h-4" fill="none" stroke="#d0d0d0" stroke-width="1.500"/></svg></button></div>
  <div class="cell"><button aria-label="Dynamic input"><svg viewBox="0 0 16 16"><path d="M4 1v8M0 5h8" stroke="#2f8fee" stroke-width="1.500"/><path d="M6 9h10v5H6z" fill="#2f8fee"/></svg></button></div>
  <div class="cell">
    <button aria-label="Ortho"><svg viewBox="0 0 16 16"><path d="M3 1v13h12M3 9q5 0 5 5" fill="none" stroke="#2f8fee" stroke-width="1.500"/></svg></button>
    <button aria-label="Polar"><svg viewBox="0 0 16 16"><path d="M13 4a6 6 0 1 0 1 4H8M12 5l3 3-3 3" fill="none" stroke="#ccc" stroke-width="1.400"/></svg></button><i class="dn"></i>
    <button aria-label="Isometric"><svg viewBox="0 0 16 16"><path d="M1 2l13 12M8 0v16" stroke="#bdbdbd" stroke-width="1.500"/></svg></button><i class="dn"></i></div>
  <div class="cell">
    <button aria-label="Snap tracking"><svg viewBox="0 0 16 16"><path d="M1 14L12 2M1 14h14M6 8l5 3" fill="none" stroke="#2f8fee" stroke-width="1.500"/></svg></button>
    <button aria-label="Object snap"><svg viewBox="0 0 16 16"><path d="M3 3h11v11H3z" fill="none" stroke="#2f8fee" stroke-width="1.500"/><path d="M1 1h4v4H1z" fill="#0b3d12" stroke="#3ec24b"/></svg></button><i class="dn"></i></div>
  <div class="cell"><button aria-label="Lineweight"><svg viewBox="0 0 16 16"><path d="M1 2.500h14M1 6h9M1 10h14M1 14h9" stroke="#ddd" stroke-width="2"/></svg></button></div>
  <div class="cell"><button aria-label="Transparency"><svg viewBox="0 0 16 16"><path d="M1 1h14v14H1z" fill="#1f6fd0"/><path d="M1 4h14M1 8h14M1 12h14M4 1v14M8 1v14M12 1v14" stroke="#6fb3ff" stroke-dasharray="1 1"/></svg></button></div>
  <div class="cell"><button aria-label="Selection cycling"><svg viewBox="0 0 16 16"><path d="M3 1v6M0 4h6" stroke="#ddd"/><path d="M6 6h9v9H6z" fill="#93bd7c"/></svg></button></div>
  <div class="cell sp"><button aria-label="3D osnap"><svg viewBox="0 0 16 16"><path d="M8 2l6 3v7l-6 3-5-3V6zM8 15V8l6-3M8 8L3 6" fill="none" stroke="#ccc"/><path d="M1 1h4v4H1z" fill="#0b3d12" stroke="#3ec24b"/></svg></button><i class="dn"></i></div>
  <div class="cell sp">
    <button aria-label="Dynamic UCS"><svg viewBox="0 0 16 16"><path d="M2 2v12h13M2 14l8-7M9 2l5-1-3 4 4-1-6 6" fill="none" stroke="#ccc" stroke-width="1.300"/></svg></button>
    <button aria-label="Filter"><svg viewBox="0 0 16 16"><path d="M2 5l5-3 7 2v7l-5 4-7-3zM2 5l7 2v8M9 7l5-3" fill="none" stroke="#ccc"/></svg></button><i class="dn"></i>
    <button aria-label="Gizmo"><svg viewBox="0 0 16 16"><path d="M8 1l6 3v8l-6 3-6-3V4z" fill="none" stroke="#bbb"/><circle cx="8" cy="8" r="2" fill="#eee"/><path d="M8 1v5" stroke="#4b8ae8"/><path d="M1 11h3v3H1z" fill="#3da248"/><path d="M12 11h3v3h-3z" fill="#d3452f"/></svg></button><i class="dn"></i></div>
  <div class="cell sp">
    <button aria-label="Annotation visibility"><svg viewBox="0 0 16 16"><path d="M6 1l2 7 6 6-7-3-6 4 4-7z" fill="#2f8fee"/><circle cx="11" cy="4" r="3" fill="none" stroke="#2f8fee" stroke-width="1.500"/></svg></button>
    <button aria-label="Auto scale"><svg viewBox="0 0 16 16"><path d="M6 1l2 7 6 6-6-3-7 4 4-7zM11 1l4 1-4 5z" fill="#c9c9c9"/></svg></button>
    <button aria-label="Annotation scale icon"><svg viewBox="0 0 16 16"><path d="M8 1l2 8 5 5-7-3-7 3 5-5z" fill="#c9c9c9"/></svg></button>
    <button class="txt scale">1:1 / 100%</button><i class="dn"></i></div>
  <div class="cell"><button aria-label="Workspace"><svg viewBox="0 0 16 16"><circle cx="8" cy="8" r="4" fill="none" stroke="#c9c9c9" stroke-width="3"/><circle cx="8" cy="8" r="6" fill="none" stroke="#c9c9c9" stroke-width="2" stroke-dasharray="2.500 2.200"/></svg></button><i class="dn"></i></div>
  <div class="cell sp"><button aria-label="Monitor"><svg viewBox="0 0 16 16"><path d="M8 1v14M1 8h14" stroke="#ddd" stroke-width="1.800"/></svg></button></div>
  <div class="cell"><button aria-label="Ruler"><svg viewBox="0 0 16 16"><path d="M6 1h5v14H6z" fill="#c4c4c4"/><path d="M6 3h2M6 6h2M6 9h2M6 12h2" stroke="#555"/></svg></button><button class="txt units">Decimal</button><i class="dn"></i></div>
  <div class="cell sp"><button aria-label="Quick properties"><svg viewBox="0 0 16 16"><path d="M4 3h8v11H4zM5 6h6M5 9h6M5 12h6M8 6v8" fill="none" stroke="#c9c9c9"/></svg></button></div>
  <div class="cell"><button aria-label="Lock UI"><svg viewBox="0 0 16 16"><path d="M1 2h13v4M1 2v9h5M1 4h13" fill="none" stroke="#ccc" stroke-width="1.500"/><path d="M7 9h7v6H7z" fill="#d5d5d5"/><path d="M12 9V7q2-3 4 0v2" fill="none" stroke="#d5d5d5"/></svg></button><i class="dn"></i></div>
  <div class="cell sp"><button aria-label="Isolate objects"><svg viewBox="0 0 16 16"><path d="M1 2h6v6H1zM7 9l4 6H3z" fill="none" stroke="#ccc" stroke-width="1.300"/><circle cx="12" cy="7" r="3" fill="none" stroke="#4b9be8" stroke-width="1.300"/></svg></button></div>
  <div class="cell sp"><button aria-label="Hardware"><svg viewBox="0 0 16 16"><circle cx="8" cy="8" r="7.500" fill="#1b7be0"/><circle cx="8" cy="8" r="5" fill="#0d56b8"/><path d="M8 9l4-3" stroke="#cfe4ff"/></svg></button></div>
  <div class="cell"><button aria-label="Clean screen"><svg viewBox="0 0 16 16"><path d="M1 3h14v11H1z" fill="none" stroke="#ccc" stroke-width="1.300"/><path d="M3 12l4-4M3 9v3h3M13 5L9 9M10 5h3v3" fill="none" stroke="#ddd" stroke-width="1.300"/></svg></button><button aria-label="Customization"><svg viewBox="0 0 16 16"><path d="M1 3h14M1 8h14M1 13h14" stroke="#ddd" stroke-width="1.800"/></svg></button></div>
</footer>
</body>
</html>
```

FILE: styles.css
```css
* { box-sizing: border-box; }
body { margin: 0; height: 100vh; min-height: 480px; display: flex; flex-direction: column; background: #3b3b3b; color: #e8e8e8; font: 11px/14px Roboto, "Open Sans", sans-serif; overflow: hidden; white-space: nowrap; }
button { margin: 0; padding: 0; border: 0; background: none; color: inherit; font: inherit; display: flex; align-items: center; justify-content: center; flex: none; }
.defs { position: absolute; width: 0; height: 0; }

/* arrows */
.dn, .up, .rt { display: block; flex: none; width: 0; height: 0; border: 4px solid transparent; border-top-color: #f0f0f0; border-bottom-width: 0; }
.dn.sm { border-width: 3px 3px 0; }
.dn.dark { border-top-color: #26354a; }
.dn.ink { border-top-color: #3c4146; }
.dn.grey { border-top-color: #777; }
.up { border-width: 0 3px 3px; border-color: transparent transparent #444; }
.rt { border-width: 4px 0 4px 4px; border-color: transparent transparent transparent #eee; }

/* title and tabs */
.top { flex: none; display: grid; grid-template-columns: 38px 1fr; grid-template-rows: 23px 19px; background: #525252; }
.app { grid-row: 1 / 3; align-self: start; height: 38px; gap: 2px; padding-left: 2px; border: 1px solid #2c2c2c; background: linear-gradient(#b8b8b8, #8c8c8c 50%, #767676); }
.titlebar { display: flex; min-width: 0; background: linear-gradient(#858585, #585858); border-bottom: 1px solid #3a3a3a; }
.qat, .info, .wins { display: flex; align-items: center; }
.qat { padding-left: 5px; height: 20px; }
.qat button { width: 22px; }
.qat svg, .info svg { width: 16px; height: 16px; }
.qat .nar, .info .nar { width: 14px; height: 20px; flex-direction: column; gap: 2px; }
.bar { width: 8px; height: 2px; background: #eee; }
.title { flex: 1; margin: 0; font-size: 11px; font-weight: 400; line-height: 22px; text-align: center; color: #f4f4f4; }
.title span { margin-left: 9px; }
.info { height: 21px; padding-right: 1px; }
.search { width: 167px; height: 20px; padding: 0 2px; border: 1px solid #3e3e3e; background: #686868; color: #eee; font: italic 11px Roboto, sans-serif; }
.search::placeholder { color: #c4c4c4; opacity: 1; }
.bino { width: 24px; }
.info .sign { width: 98px; justify-content: flex-start; gap: 5px; padding-left: 2px; }
.a12 { width: 12px; }
.b26 { width: 26px; }
.b18 { width: 18px; }
.sep { width: 1px; height: 18px; margin: 0 6px; background: #8a8a8a; }
.q { width: 15px; height: 15px; border-radius: 50%; background: #f4f7fb; color: #24508f; font-size: 12px; line-height: 15px; }
.wins { margin-left: 17px; }
.wins button { width: 16px; }
.wins svg { width: 12px; height: 12px; }
.tabs { display: flex; align-items: stretch; padding-left: 5px; color: #d2d2d2; }
.tabs button { padding: 0 10px 0 9px; }
.tabs .on { margin: 2px 2px 0 0; border: 1px solid #353535; border-bottom: 0; background: #5c5c5c; color: #fff; }
.tabs .mini { margin-left: 10px; gap: 5px; }
.pill { width: 13px; height: 7px; border-radius: 2px; background: #eee; display: flex; align-items: center; justify-content: center; }

/* ribbon */
.ribbon { flex: none; display: flex; height: 95px; padding: 0 0 2px 2px; background: #414141; border-bottom: 2px solid #5a6066; box-shadow: inset 0 -2px #2b2d2f; }
.panel { flex: none; display: flex; flex-direction: column; background: #575757; border-right: 1px solid #3e3e3e; border-left: 1px solid #646464; }
.panel .body { flex: 1; display: flex; padding-top: 4px; }
.panel footer { height: 17px; display: flex; align-items: center; justify-content: center; gap: 7px; position: relative; background: linear-gradient(#4c4c4c, #404040); }
.launch { position: absolute; right: 4px; top: 6px; width: 7px; height: 7px; }
.modeling { width: 124px; } .mesh { width: 74px; } .solid, .draw { width: 88px; } .modify { width: 136px; }
.section { width: 71px; } .coords { width: 136px; } .viewp { width: 118px; } .selection { width: 161px; }
.big { flex-direction: column; justify-content: flex-start; padding-top: 2px; line-height: 14px; }
.big svg { width: 32px; height: 32px; margin-bottom: 2px; }
.big .dn { margin-top: 3px; }
.w42 { width: 42px; } .w48 { width: 48px; } .w52 { width: 52px; } .w60 { width: 60px; }
.grid { display: grid; grid-auto-rows: 22px; align-items: center; align-content: start; justify-items: center; padding-top: 1px; }
.grid svg, .viewbtn svg, .drop svg { width: 18px; height: 18px; }
.g1 { grid-template-columns: 30px; }
.g2 { grid-template-columns: 20px; }
.g3 { grid-template-columns: 26px 26px 22px 11px; }
.g4 { grid-template-columns: 23px 24px 28px 8px; }
.g5 { grid-template-columns: 26px 24px 22px 26px 22px 10px; }
.g6 { grid-template-columns: 19px 15px repeat(4, 24px); padding-left: 3px; }
.g6 .dn { justify-self: start; margin-left: 2px; }
.section .body { justify-content: center; }
.section footer { justify-content: flex-start; padding-left: 3px; gap: 7px; }
.drop { position: relative; display: flex; align-items: center; height: 20px; border: 1px solid #333; background: linear-gradient(#6a6a6a, #505050); }
.drop svg { flex: none; margin-left: 1px; }
.drop select { flex: 1; min-width: 0; appearance: none; border: 0; padding: 0; background: none; color: #eee; font: inherit; }
.drop .dn { margin: 0 3px 0 0; }
.world { grid-column: 3 / 7; width: 94px; height: 19px; }
.panel .stack { flex-direction: column; gap: 3px; padding: 5px 2px 0 1px; }
.viewbtn { display: flex; align-items: center; gap: 4px; padding-left: 2px; }
.selection .body { padding-left: 2px; }
.cull { width: 42px; height: 67px; border: 1px solid #2d4468; background: linear-gradient(#7d9cc9, #5274a8 60%, #6e92c8); }
.selection .big { margin-right: 1px; }
.giz { align-self: center; margin: 22px 0 0 -9px; }
.fold { width: 55px; margin-left: 2px; flex-direction: column; justify-content: flex-start; background: #606060; border: 1px solid #727272; border-top: 0; padding-top: 4px; }
.fold svg { width: 32px; height: 32px; margin-bottom: 2px; }
.fold.short svg { width: 18px; height: 18px; margin-bottom: 1px; }
.fold .dn { margin: auto 0 5px; }

/* drawing area */
.canvas { flex: 1; min-height: 0; position: relative; background: #212830; overflow: hidden; }
.scene { display: block; width: 100%; height: 100%; }
.ax { font: 15px "Open Sans", sans-serif; font-weight: 300; }
.cube { font: bold 8px "Open Sans", sans-serif; }
.vlabel { position: absolute; left: 3px; top: 6px; display: flex; color: #e4e4e4; font-size: 12px; }
.vwin { position: absolute; right: 17px; top: 8px; display: flex; gap: 7px; }
.vwin svg { width: 12px; height: 12px; }
.wcs { position: absolute; right: 42px; top: 135px; width: 44px; height: 17px; gap: 4px; border: 1px solid #b4b8bf; border-radius: 4px; background: #9497a0; color: #555a62; font: 10px "Liberation Sans", sans-serif; }
.wcs svg { width: 9px; height: 7px; }
.nav { position: absolute; right: 11px; top: 175px; width: 30px; height: 199px; display: flex; flex-direction: column; align-items: center; justify-content: space-between; padding: 1px 2px; border-radius: 4px; background: #5d6266; }
.nav button svg { width: 22px; height: 24px; fill: none; stroke: #3c4146; }
.tiny { align-self: flex-end; width: 8px; height: 8px; }
.edge { position: absolute; right: 2px; top: 0; bottom: 2px; width: 6px; background: #b4cfe9; }

/* command line */
.cmd { flex: none; display: grid; grid-template: 41px 21px / 21px 1fr; border-top: 1px solid #777; color: #111; font: 11px/14px "DejaVu Sans Mono", monospace; }
.grip { grid-row: 1 / 3; display: flex; flex-direction: column; align-items: center; gap: 9px; padding-top: 4px; background: linear-gradient(#777, #3c3c3c); }
.grip svg { width: 12px; height: 12px; }
.dots { width: 17px; height: 5px; margin-bottom: -3px; background: radial-gradient(#bbb 40%, transparent 50%) 0 0 / 3px 3px; }
.log { display: flex; flex-direction: column; justify-content: flex-end; padding: 0 2px; background: #c8c8c8; border-bottom: 1px solid #aaa; }
.log p { margin: 0; }
.entry { display: flex; align-items: center; padding-left: 5px; background: #fff; }
.prompt { gap: 3px; }
.prompt svg { width: 14px; height: 14px; }
.entry input { flex: 1; border: 0; padding: 0 7px; background: none; font: italic 11px "DejaVu Sans Mono", monospace; }
.entry input::placeholder { color: #8a8a8a; opacity: 1; }

/* layout tabs */
.sheets { flex: none; display: flex; height: 20px; padding-left: 11px; color: #b0b0b0; }
.sheets button { height: 18px; padding: 0 11px; background: linear-gradient(#555, #626262); clip-path: polygon(0 0, 100% 0, calc(100% - 3px) 12px, calc(100% - 9px) 100%, 9px 100%, 3px 12px); }
.sheets .on { background: linear-gradient(#666, #888); color: #fff; font-weight: 700; }
.sheets .plus { width: 26px; margin-left: 2px; font-weight: 700; font-size: 14px; color: #ccc; }

/* status bar */
.status { flex: none; display: flex; justify-content: flex-end; height: 27px; padding-right: 1px; border-bottom: 2px solid #c9ccdc; font-size: 12px; }
.cell { display: flex; align-items: center; border: 1px solid #707070; border-left-width: 0; background: #484848; color: #f0f0f0; }
.cell.pos { justify-content: flex-end; width: 171px; padding-right: 5px; border-left-width: 1px; margin-right: 1px; }
.cell.sp { margin-right: 1px; }
.cell button { width: 23px; height: 100%; }
.cell svg { width: 16px; height: 16px; }
.cell .dn { margin: 0 3px 0 2px; }
.cell .txt { width: 46px; }
.cell .scale { width: 62px; }
.cell .units { width: 56px; }
```
